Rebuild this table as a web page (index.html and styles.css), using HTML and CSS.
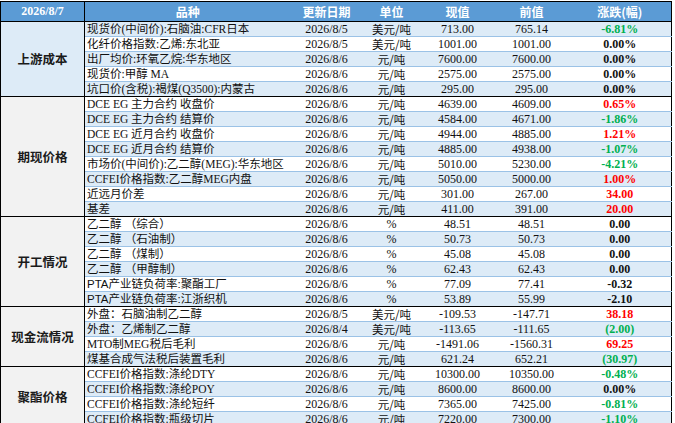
FILE: index.html
```html
<!DOCTYPE html>
<html lang="zh">
<head>
<meta charset="utf-8">
<title>乙二醇数据表</title>
<link rel="stylesheet" href="styles.css">
</head>
<body>
<table class="sheet">
  <colgroup>
    <col class="c-cat"><col class="c-name"><col class="c-date"><col class="c-unit"><col class="c-now"><col class="c-prev"><col class="c-chg">
  </colgroup>
  <thead>
    <tr class="head">
      <th class="h-date">2026/8/7</th>
      <th>品种</th>
      <th>更新日期</th>
      <th>单位</th>
      <th>现值</th>
      <th>前值</th>
      <th>涨跌(幅)</th>
    </tr>
  </thead>
  <tbody class="sec">
    <tr class="alt"><td class="cat" rowspan="5">上游成本</td><td class="name">现货价(中间价):石脑油:CFR日本</td><td>2026/8/5</td><td class="unit">美元/吨</td><td>713.00</td><td>765.14</td><td class="chg dn">-6.81%</td></tr>
    <tr><td class="name">化纤价格指数:乙烯:东北亚</td><td>2026/8/5</td><td class="unit">美元/吨</td><td>1001.00</td><td>1001.00</td><td class="chg">0.00%</td></tr>
    <tr class="alt"><td class="name">出厂均价:环氧乙烷:华东地区</td><td>2026/8/6</td><td class="unit">元/吨</td><td>7600.00</td><td>7600.00</td><td class="chg">0.00%</td></tr>
    <tr><td class="name">现货价:甲醇 MA</td><td>2026/8/6</td><td class="unit">元/吨</td><td>2575.00</td><td>2575.00</td><td class="chg">0.00%</td></tr>
    <tr class="alt"><td class="name">坑口价(含税):褐煤(Q3500):内蒙古</td><td>2026/8/6</td><td class="unit">元/吨</td><td>295.00</td><td>295.00</td><td class="chg">0.00%</td></tr>
  </tbody>
  <tbody class="sec">
    <tr><td class="cat" rowspan="8">期现价格</td><td class="name">DCE EG 主力合约 收盘价</td><td>2026/8/6</td><td class="unit">元/吨</td><td>4639.00</td><td>4609.00</td><td class="chg up">0.65%</td></tr>
    <tr class="alt"><td class="name">DCE EG 主力合约 结算价</td><td>2026/8/6</td><td class="unit">元/吨</td><td>4584.00</td><td>4671.00</td><td class="chg dn">-1.86%</td></tr>
    <tr><td class="name">DCE EG 近月合约 收盘价</td><td>2026/8/6</td><td class="unit">元/吨</td><td>4944.00</td><td>4885.00</td><td class="chg up">1.21%</td></tr>
    <tr class="alt"><td class="name">DCE EG 近月合约 结算价</td><td>2026/8/6</td><td class="unit">元/吨</td><td>4885.00</td><td>4938.00</td><td class="chg dn">-1.07%</td></tr>
    <tr><td class="name">市场价(中间价):乙二醇(MEG):华东地区</td><td>2026/8/6</td><td class="unit">元/吨</td><td>5010.00</td><td>5230.00</td><td class="chg dn">-4.21%</td></tr>
    <tr class="alt"><td class="name">CCFEI价格指数:乙二醇MEG内盘</td><td>2026/8/6</td><td class="unit">元/吨</td><td>5050.00</td><td>5000.00</td><td class="chg up">1.00%</td></tr>
    <tr><td class="name">近远月价差</td><td>2026/8/6</td><td class="unit">元/吨</td><td>301.00</td><td>267.00</td><td class="chg up">34.00</td></tr>
    <tr class="alt"><td class="name">基差</td><td>2026/8/6</td><td class="unit">元/吨</td><td>411.00</td><td>391.00</td><td class="chg up">20.00</td></tr>
  </tbody>
  <tbody class="sec">
    <tr><td class="cat" rowspan="6">开工情况</td><td class="name sans">乙二醇 （综合）</td><td>2026/8/6</td><td>%</td><td>48.51</td><td>48.51</td><td class="chg">0.00</td></tr>
    <tr class="alt"><td class="name sans">乙二醇 （石油制）</td><td>2026/8/6</td><td>%</td><td>50.73</td><td>50.73</td><td class="chg">0.00</td></tr>
    <tr><td class="name sans">乙二醇 （煤制）</td><td>2026/8/6</td><td>%</td><td>45.08</td><td>45.08</td><td class="chg">0.00</td></tr>
    <tr class="alt"><td class="name sans">乙二醇 （甲醇制）</td><td>2026/8/6</td><td>%</td><td>62.43</td><td>62.43</td><td class="chg">0.00</td></tr>
    <tr><td class="name sans">PTA产业链负荷率:聚酯工厂</td><td>2026/8/6</td><td>%</td><td>77.09</td><td>77.41</td><td class="chg">-0.32</td></tr>
    <tr class="alt"><td class="name sans">PTA产业链负荷率:江浙织机</td><td>2026/8/6</td><td>%</td><td>53.89</td><td>55.99</td><td class="chg">-2.10</td></tr>
  </tbody>
  <tbody class="sec">
    <tr><td class="cat" rowspan="4">现金流情况</td><td class="name">外盘：石脑油制乙二醇</td><td>2026/8/5</td><td class="unit">美元/吨</td><td>-109.53</td><td>-147.71</td><td class="chg up">38.18</td></tr>
    <tr class="alt"><td class="name">外盘：乙烯制乙二醇</td><td>2026/8/4</td><td class="unit">美元/吨</td><td>-113.65</td><td>-111.65</td><td class="chg dn">(2.00)</td></tr>
    <tr><td class="name">MTO制MEG税后毛利</td><td>2026/8/6</td><td class="unit">元/吨</td><td>-1491.06</td><td>-1560.31</td><td class="chg up">69.25</td></tr>
    <tr class="alt"><td class="name">煤基合成气法税后装置毛利</td><td>2026/8/6</td><td class="unit">元/吨</td><td>621.24</td><td>652.21</td><td class="chg dn">(30.97)</td></tr>
  </tbody>
  <tbody class="sec">
    <tr><td class="cat" rowspan="4">聚酯价格</td><td class="name">CCFEI价格指数:涤纶DTY</td><td>2026/8/6</td><td class="unit">元/吨</td><td>10300.00</td><td>10350.00</td><td class="chg dn">-0.48%</td></tr>
    <tr class="alt"><td class="name">CCFEI价格指数:涤纶POY</td><td>2026/8/6</td><td class="unit">元/吨</td><td>8600.00</td><td>8600.00</td><td class="chg">0.00%</td></tr>
    <tr><td class="name">CCFEI价格指数:涤纶短纤</td><td>2026/8/6</td><td class="unit">元/吨</td><td>7365.00</td><td>7425.00</td><td class="chg dn">-0.81%</td></tr>
    <tr class="alt"><td class="name">CCFEI价格指数:瓶级切片</td><td>2026/8/6</td><td class="unit">元/吨</td><td>7220.00</td><td>7300.00</td><td class="chg dn">-1.10%</td></tr>
  </tbody>
</table>
</body>
</html>
```

FILE: styles.css
```css
html, body {
  margin: 0;
  padding: 0;
  background: #ffffff;
}
body {
  padding-top: 1px;
  font-family: "Liberation Serif", "Noto Sans CJK SC", serif;
  font-size: 12px;
  color: #111111;
}
.sheet {
  border-collapse: collapse;
  table-layout: fixed;
  width: 671px;
}
.c-cat { width: 84px; }
.c-name { width: 206px; }
.c-date { width: 72px; }
.c-unit { width: 58px; }
.c-now { width: 74px; }
.c-prev { width: 74px; }
.c-chg { width: 103px; }

.head th {
  height: 19px;
  padding: 0;
  background: #5b9bd5;
  color: #ffffff;
  font-family: "Noto Sans CJK SC", "Liberation Sans", sans-serif;
  font-weight: bold;
  font-size: 12px;
  line-height: 19px;
  text-align: center;
  border-top: 1px solid #000000;
  border-bottom: 1px solid #000000;
}
.head th:first-child {
  border-left: 1px solid #000000;
  border-right: 1px solid #000000;
}
.head th:last-child {
  border-right: 1px solid #000000;
}
.head .h-date {
  font-family: "Liberation Serif", serif;
  font-size: 12px;
}

.sheet td {
  height: 14px;
  padding: 0;
  line-height: 14px;
  text-align: center;
  white-space: nowrap;
  border-bottom: 1px solid #9bc2e6;
  background: #ffffff;
}
.sheet tr.alt td {
  background: #ddebf7;
}
.sheet td:last-child {
  border-right: 1px solid #000000;
}
.sheet td.name {
  text-align: left;
  padding-left: 2px;
  font-size: 11.5px;
}
.sheet td.sans {
  font-family: "Liberation Sans", "Noto Sans CJK SC", sans-serif;
}
.sheet td.unit {
  font-family: "Noto Sans CJK SC", "Liberation Sans", sans-serif;
  font-size: 11.5px;
}
.sheet td.cat {
  background: #f2f2f2;
  font-family: "Noto Sans CJK SC", "Liberation Sans", sans-serif;
  font-weight: bold;
  font-size: 12.5px;
  color: #1a1a1a;
  border-left: 1px solid #000000;
  border-right: 1px solid #000000;
  border-bottom: 1px solid #000000;
}
.sec tr:last-child td {
  border-bottom: 1px solid #000000;
}
.chg {
  font-weight: bold;
  color: #111111;
}
.chg.up { color: #ff0000; }
.chg.dn { color: #00b050; }
```
